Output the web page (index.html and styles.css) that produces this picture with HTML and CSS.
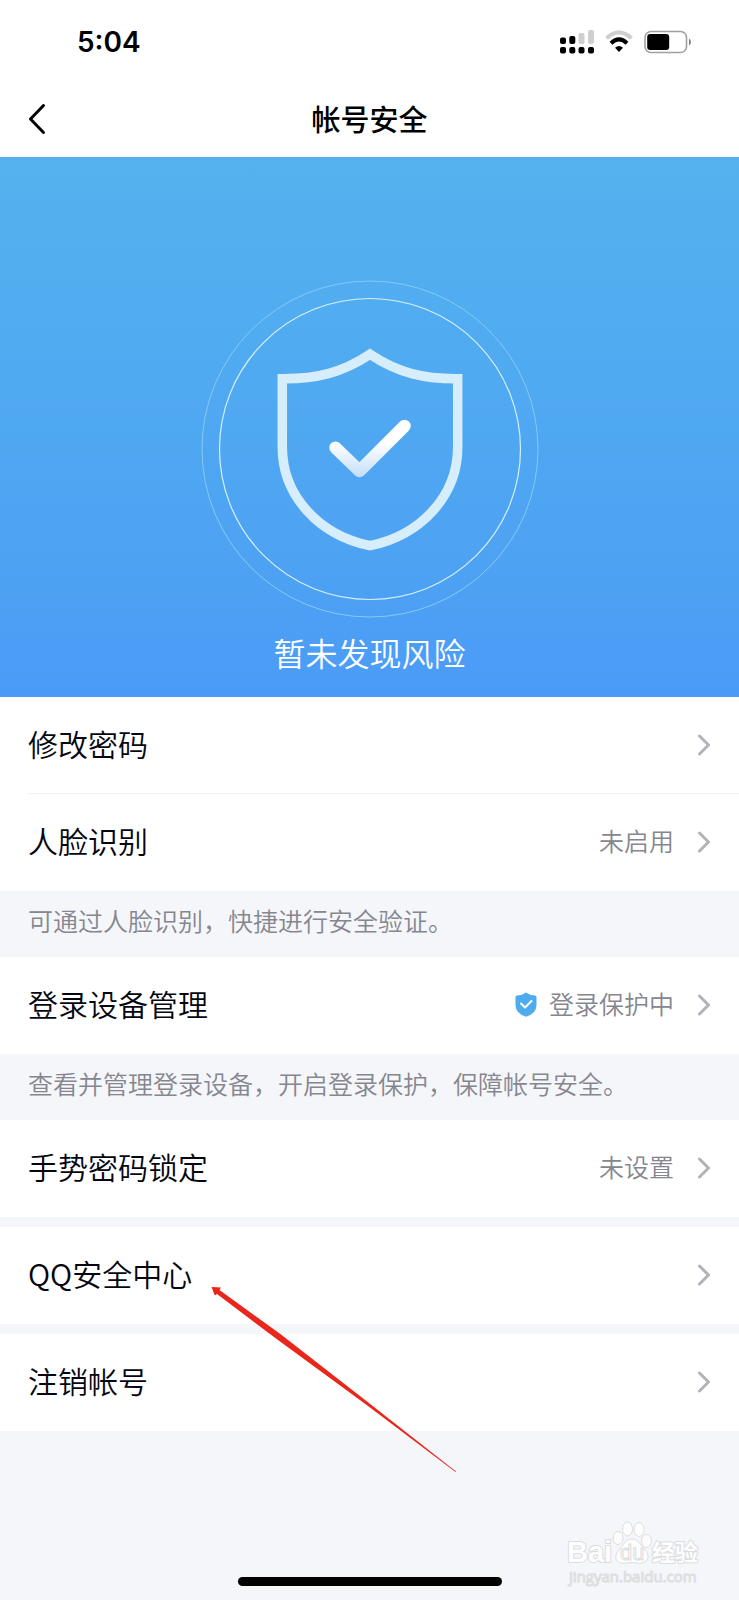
FILE: index.html
```
<!DOCTYPE html>
<html lang="zh-CN">
    <head>
        <meta charset="UTF-8">
        <meta name="viewport" content="width=device-width, initial-scale=1.0">
        <title>帐号安全</title>
        <link rel="stylesheet" href="styles.css">
    </head>
    <body>

        <div class="status-bar">
            <span class="time">5:04</span>
            <div class="status-icons">
                <svg width="34" height="24" viewBox="0 0 34 24">
                    <g fill="#cfcfcf">
                        <rect x="18.5" y="3" width="6" height="11" rx="2"/>
                        <rect x="28" y="0" width="6" height="14" rx="2"/>
                    </g>
                    <rect x="0" y="7.5" width="6" height="6.5" rx="2"/>
                    <rect x="9.3" y="6" width="6" height="8" rx="2"/>
                    <rect x="0" y="17" width="6" height="6.5" rx="2"/>
                    <rect x="9.3" y="17" width="6" height="6.5" rx="2"/>
                    <rect x="18.5" y="17" width="6" height="6.5" rx="2"/>
                    <rect x="28" y="17" width="6" height="6.5" rx="2"/>
                </svg>
                <svg width="28" height="24" viewBox="0 0 28 24" fill="none">
                    <path d="M1.5 8.3Q14-3.5 26.5 8.3" stroke="#cfcfcf" stroke-width="4"/>
                    <path d="M6 13.2Q14 5.6 22 13.2" stroke="#000" stroke-width="4"/>
                    <path d="M10 17.8Q14 14.4 18 17.8L14 22Z" fill="#000"/>
                </svg>
                <svg width="47" height="24" viewBox="0 0 47 24">
                    <rect x="1" y="1.5" width="41.5" height="21" rx="6" fill="none" stroke="#a0a0a0" stroke-width="1.6"/>
                    <rect x="3.2" y="4" width="22" height="16" rx="3"/>
                    <path d="M45 8.5Q47 9.5 47 12T45 15.5Z" fill="#808080"/>
                </svg>
            </div>
        </div>

        <header class="nav-bar">
            <button class="back-button" aria-label="返回">
                <svg width="18" height="32" viewBox="0 0 18 32" fill="none" stroke="#000" stroke-width="3" stroke-linecap="round" stroke-linejoin="round">
                    <path d="M15.5 2.5L2.5 16L15.5 29.5"/>
                </svg>
            </button>
            <h1>帐号安全</h1>
        </header>

        <section class="hero">
            <svg width="338" height="338" viewBox="0 0 338 338" fill="none">
                <defs>
                    <linearGradient id="tick" x1="0" y1="140" x2="0" y2="197" gradientUnits="userSpaceOnUse">
                        <stop offset="0.4" stop-color="#fff"/>
                        <stop offset="1" stop-color="#c3def9"/>
                    </linearGradient>
                </defs>
                <circle cx="169" cy="169" r="168" stroke="#83cbf6"/>
                <circle cx="169" cy="169" r="150.5" stroke="#d5f1fc" stroke-width="1.2"/>
                <path d="M81.3 98.7C115 99 141 93 169 74.3C197 93 223 99 256.7 98.7V167C256.7 216 220 255 169 265.7C118 255 81.3 216 81.3 167Z" stroke="#d6edfb" stroke-width="9.5"/>
                <path d="M134.5 167.7L158.5 191L203.5 146" stroke="url(#tick)" stroke-width="12.5" stroke-linecap="round" stroke-linejoin="round"/>
            </svg>
            <p>暂未发现风险</p>
        </section>

        <main>
            <a class="row divided" href="#">
                <span class="label">修改密码</span>
                <svg class="chevron" viewBox="0 0 12 22"><path d="M1.5 2L10.5 11L1.5 20"/></svg>
            </a>
            <a class="row" href="#">
                <span class="label">人脸识别</span>
                <span class="value">未启用</span>
                <svg class="chevron" viewBox="0 0 12 22"><path d="M1.5 2L10.5 11L1.5 20"/></svg>
            </a>
            <p class="note">可通过人脸识别，快捷进行安全验证。</p>

            <a class="row" href="#">
                <span class="label">登录设备管理</span>
                <svg class="badge" width="22" height="25" viewBox="0 0 22 25">
                    <path d="M11 0.5Q15 3.5 20 3.5Q21.5 3.5 21.5 5V13Q21.5 21.5 11 24.7Q0.5 21.5 0.5 13V5Q0.5 3.5 2 3.5Q7 3.5 11 0.5Z" fill="#4fabf0"/>
                    <path d="M6 11.5L10 15.5L16.5 9" fill="none" stroke="#fff" stroke-width="2" stroke-linecap="round" stroke-linejoin="round"/>
                </svg>
                <span class="value">登录保护中</span>
                <svg class="chevron" viewBox="0 0 12 22"><path d="M1.5 2L10.5 11L1.5 20"/></svg>
            </a>
            <p class="note">查看并管理登录设备，开启登录保护，保障帐号安全。</p>

            <a class="row" href="#">
                <span class="label">手势密码锁定</span>
                <span class="value">未设置</span>
                <svg class="chevron" viewBox="0 0 12 22"><path d="M1.5 2L10.5 11L1.5 20"/></svg>
            </a>

            <a class="row spaced" href="#">
                <span class="label">QQ安全中心</span>
                <svg class="chevron" viewBox="0 0 12 22"><path d="M1.5 2L10.5 11L1.5 20"/></svg>
                <svg class="arrow" width="246" height="186" viewBox="0 0 246 186">
                    <path d="M0.5 0L10 0.5L8.500 3L70 47.500L156 114.500L245 184.500L244.500 185L155 117.500L67 53L6 7L3.800 8.500Z" fill="#ea261a"/>
                </svg>
            </a>

            <a class="row spaced" href="#">
                <span class="label">注销帐号</span>
                <svg class="chevron" viewBox="0 0 12 22"><path d="M1.5 2L10.5 11L1.5 20"/></svg>
            </a>
        </main>

        <footer>
            <svg class="watermark" width="136" height="68" viewBox="0 0 136 68">
                <g fill="#fdfdfe" stroke="#dcdddf" stroke-width="1">
                    <ellipse cx="52" cy="17" rx="5" ry="6.5"/>
                    <ellipse cx="61.500" cy="8" rx="5" ry="7"/>
                    <ellipse cx="73" cy="8.500" rx="5" ry="7"/>
                    <ellipse cx="80.500" cy="20" rx="5" ry="6.5"/>
                    <path d="M66 18C73 18 74 24 79 29C86 36 80 44 71 42Q66 41 61 42C51 44 46 37 53 29C58 24 59 18 66 18Z"/>
                    <g paint-order="stroke" stroke-width="2">
                        <text class="logo" x="1" y="41">Bai</text>
                        <text class="logo-cn" x="86" y="40">经验</text>
                    </g>
                    <text class="logo-du" x="54" y="39">du</text>
                    <text class="site" x="3" y="61">jingyan.baidu.com</text>
                </g>
            </svg>
            <div class="home-indicator"></div>
        </footer>

    </body>
</html>
```
FILE: styles.css
```
* {
    box-sizing: border-box;
}

body {
    display: flex;
    flex-direction: column;
    min-height: 100vh;
    margin: 0;
    background-color: #f4f6f9;
    color: #05060f;
    font-family: "Noto Sans CJK SC", sans-serif;
}

h1,
p {
    margin: 0;
}

.status-bar {
    display: flex;
    align-items: center;
    justify-content: space-between;
    height: 84px;
    padding: 0 48px 0 77px;
    background-color: #fff;
    color: #000;
}

.time {
    font-family: Inter, sans-serif;
    font-size: 28px;
    font-weight: 600;
}

.status-icons {
    display: flex;
    align-items: center;
    gap: 11px;
}

.nav-bar {
    display: grid;
    grid-template-columns: 1fr auto 1fr;
    align-items: center;
    height: 73px;
    padding: 0 28px 4px;
    background-color: #fff;
    color: #000;
}

.nav-bar h1 {
    padding-bottom: 2px;
    font-size: 29px;
    font-weight: 500;
    line-height: 42px;
}

.back-button {
    display: flex;
    justify-self: start;
    padding: 0;
    border: none;
    background: none;
    cursor: pointer;
}

.hero {
    display: flex;
    flex-direction: column;
    align-items: center;
    gap: 10px;
    padding: 123px 28px 21px;
    background: linear-gradient(#56b1ee, #50aaf1 40%, #4da1f3 80%, #4a9bf8);
}

.hero p {
    color: #fff;
    font-size: 32px;
    font-weight: 350;
    line-height: 48px;
}

.row {
    display: flex;
    position: relative;
    align-items: center;
    height: 97px;
    padding: 0 29px 2px 28px;
    background-color: #fff;
    color: inherit;
    text-decoration: none;
}

.divided::after {
    content: "";
    position: absolute;
    right: 0;
    bottom: 0;
    left: 28px;
    border-bottom: 1px solid #f0f1f3;
}

.spaced {
    margin-top: 10px;
}

.label {
    flex: 1;
    padding-bottom: 3px;
    font-size: 30px;
    font-weight: 350;
    line-height: 44px;
}

.value {
    padding-bottom: 3px;
    color: #85868f;
    font-size: 25px;
    font-weight: 350;
    line-height: 40px;
}

.badge {
    margin-right: 12px;
}

.chevron {
    width: 12px;
    height: 22px;
    margin-left: 24px;
    fill: none;
    stroke: #b2b3ba;
    stroke-width: 3;
    stroke-linecap: round;
    stroke-linejoin: round;
}

.note {
    padding: 9px 28px 17px;
    color: #85868f;
    font-size: 25px;
    font-weight: 350;
    line-height: 40px;
}

/* pointer drawn over the list */
.arrow {
    position: absolute;
    z-index: 1;
    top: 60px;
    left: 211px;
}

footer {
    display: flex;
    position: relative;
    justify-content: center;
    margin-top: auto;
    padding-bottom: 14px;
}

.home-indicator {
    width: 264px;
    height: 9px;
    border-radius: 5px;
    background-color: #000;
}

.watermark {
    position: absolute;
    right: 37px;
    bottom: 11px;
}

.logo {
    font-family: "Liberation Sans", sans-serif;
    font-size: 29px;
    font-weight: 700;
}

.logo-du {
    font-family: "Liberation Sans", sans-serif;
    font-size: 22px;
}

.logo-cn {
    font-size: 23px;
    font-weight: 700;
}

.site {
    font-family: "Open Sans", sans-serif;
    font-size: 15px;
}
```
